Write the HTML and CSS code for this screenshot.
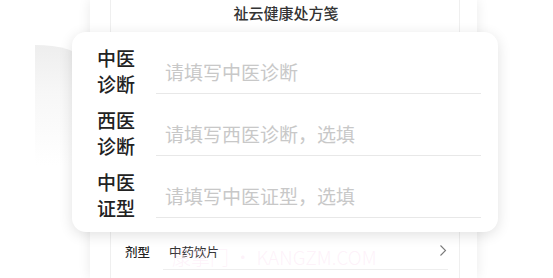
FILE: index.html
```html
<!DOCTYPE html>
<html lang="zh">
<head>
<meta charset="utf-8">
<link rel="stylesheet" href="styles.css">
</head>
<body>
<div class="stage">
  <div class="curl"></div>
  <div class="phone">
    <div class="sheet">
      <div class="title">祉云健康处方笺</div>
      <div class="hidden-area"></div>
      <div class="row">
        <span class="row-label">剂型</span>
        <div class="row-field">
          <span class="row-value">中药饮片</span>
          <svg class="chev" width="8" height="13" viewBox="0 0 8 13"><polyline points="1.5,1.5 6.5,6.5 1.5,11.5" fill="none" stroke="#7a7a7a" stroke-width="1.1"/></svg>
        </div>
      </div>
    </div>
  </div>
  <div class="watermark">康掌门 • KANGZM.COM</div>
  <div class="card">
    <div class="frow">
      <div class="flabel"><span class="ln">中医</span><span class="ln">诊断</span></div>
      <div class="ffield"><span class="ph">请填写中医诊断</span></div>
    </div>
    <div class="frow">
      <div class="flabel"><span class="ln">西医</span><span class="ln">诊断</span></div>
      <div class="ffield"><span class="ph">请填写西医诊断，选填</span></div>
    </div>
    <div class="frow">
      <div class="flabel"><span class="ln">中医</span><span class="ln">证型</span></div>
      <div class="ffield"><span class="ph">请填写中医证型，选填</span></div>
    </div>
  </div>
</div>
</body>
</html>
```

FILE: styles.css
```css
html, body {
  margin: 0;
  padding: 0;
  background: #ffffff;
  overflow: hidden;
}
.stage {
  position: relative;
  width: 553px;
  height: 278px;
  overflow: hidden;
  font-family: "Noto Sans CJK SC", "Noto Sans", sans-serif;
  background: #ffffff;
}
.curl {
  position: absolute;
  left: 35px;
  top: 45px;
  width: 45px;
  height: 120px;
  border-top-right-radius: 45px 14px;
  background: linear-gradient(to bottom, rgba(238,238,238,1) 0%, rgba(245,245,245,0.8) 40%, rgba(255,255,255,0) 100%);
}
.phone {
  margin-left: 90px;
  width: 387px;
  height: 278px;
  background: #ffffff;
  box-shadow: 0 0 12px rgba(0,0,0,0.09);
  padding: 0 17px 0 20px;
  box-sizing: border-box;
  position: relative;
}
.sheet {
  height: 100%;
  border-left: 1px solid #efefef;
  border-right: 1px solid #efefef;
  display: flex;
  flex-direction: column;
}
.title {
  height: 25px;
  line-height: 25px;
  text-align: center;
  font-size: 15px;
  font-weight: 500;
  color: #333333;
  padding-left: 2px;
}
.hidden-area {
  height: 207px;
}
.row {
  display: flex;
  align-items: stretch;
  height: 38px;
  padding: 0 11px 0 14px;
}
.row-label {
  display: flex;
  align-items: center;
  font-size: 12.5px;
  font-weight: 500;
  color: #222222;
  width: 38px;
}
.row-field {
  flex: 1;
  display: flex;
  align-items: center;
  justify-content: space-between;
  border-bottom: 1px solid #eeeeee;
  padding-left: 6px;
  padding-top: 1px;
}
.row-value {
  font-size: 12.5px;
  color: #333333;
}
.chev {
  margin-right: 1px;
  margin-top: -2px;
}
.watermark {
  position: absolute;
  left: 172px;
  top: 245px;
  font-family: "Noto Sans CJK SC", "Noto Sans", sans-serif;
  font-size: 19px;
  line-height: 24px;
  font-weight: 300;
  color: rgba(248, 190, 228, 0.2);
  white-space: nowrap;
}
.card {
  position: absolute;
  left: 72px;
  top: 32px;
  width: 426px;
  height: 200px;
  background: #ffffff;
  border-radius: 14px;
  box-shadow: 0 3px 14px rgba(0,0,0,0.12);
  padding: 0 17px 0 25px;
  box-sizing: border-box;
}
.frow {
  display: flex;
  height: 62px;
  padding-top: 13px;
  box-sizing: border-box;
}
.flabel {
  width: 38px;
  display: flex;
  flex-direction: column;
  gap: 6px;
  padding-top: 3px;
  margin-right: 21px;
}
.ln {
  display: block;
  font-size: 19px;
  line-height: 20px;
  height: 20px;
  font-weight: 500;
  color: #222222;
  white-space: nowrap;
}
.ffield {
  flex: 1;
  display: flex;
  align-items: center;
  border-bottom: 1px solid #e8e8e8;
  padding-left: 9px;
  padding-top: 5px;
}
.ph {
  font-size: 19px;
  color: #c8c8c8;
  font-weight: 400;
}
```
